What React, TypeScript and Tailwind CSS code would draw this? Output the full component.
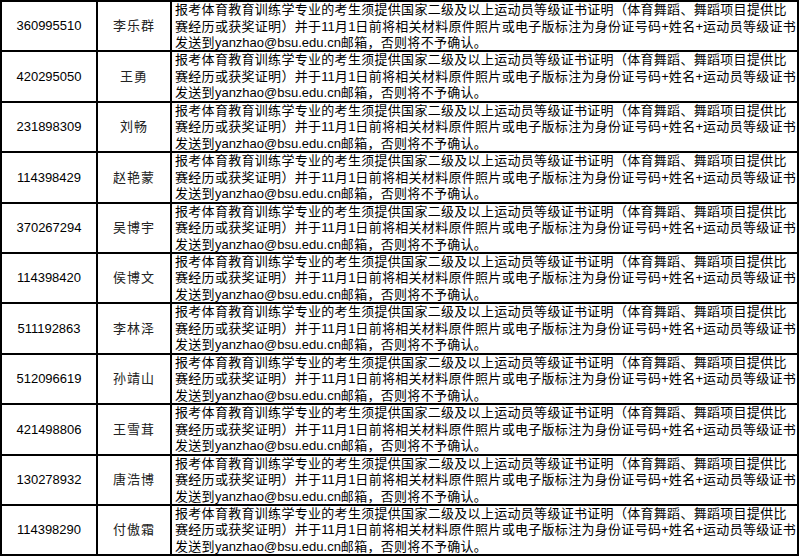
import React from 'react';

const rows: [string, string][] = [
  ['360995510', '李乐群'],
  ['420295050', '王勇'],
  ['231898309', '刘畅'],
  ['114398429', '赵艳蒙'],
  ['370267294', '吴博宇'],
  ['114398420', '侯博文'],
  ['511192863', '李林泽'],
  ['512096619', '孙靖山'],
  ['421498806', '王雪茸'],
  ['130278932', '唐浩博'],
  ['114398290', '付傲霜'],
];

const font = { fontFamily: '"Liberation Sans", "Noto Sans CJK SC", sans-serif' };

const App: React.FC = () => {
  return (
    <div className="w-[800px] h-[557px] bg-white overflow-hidden">
      <div className="w-[799px] border-t-2 border-l-2 border-black text-black" style={font}>
        {rows.map(([id, name]) => (
          <div key={id} className="grid grid-cols-[96px_74px_627px] h-[50.4px] border-b-2 border-black">
            <div className="border-r-2 border-black flex items-center justify-center text-[13px]">{id}</div>
            <div className="border-r-2 border-black flex items-center justify-center text-[13px] tracking-[1px] text-[#222]">
              {name}
            </div>
            <div className="border-r-2 border-black pl-[3px] text-[13px] leading-[16.5px] tracking-[0.3px] whitespace-nowrap overflow-hidden">
              <div>报考体育教育训练学专业的考生须提供国家二级及以上运动员等级证书证明（体育舞蹈、舞蹈项目提供比</div>
              <div>
                赛经历或获奖证明）并于<span className="tracking-normal">11</span>月<span className="tracking-normal">1</span>
                日前将相关材料原件照片或电子版标注为身份证号码<span className="tracking-normal">+</span>姓名
                <span className="tracking-normal">+</span>运动员等级证书
              </div>
              <div>
                发送到<span className="tracking-normal">yanzhao@bsu.edu.cn</span>邮箱，否则将不予确认。
              </div>
            </div>
          </div>
        ))}
      </div>
    </div>
  );
};

export default App;
